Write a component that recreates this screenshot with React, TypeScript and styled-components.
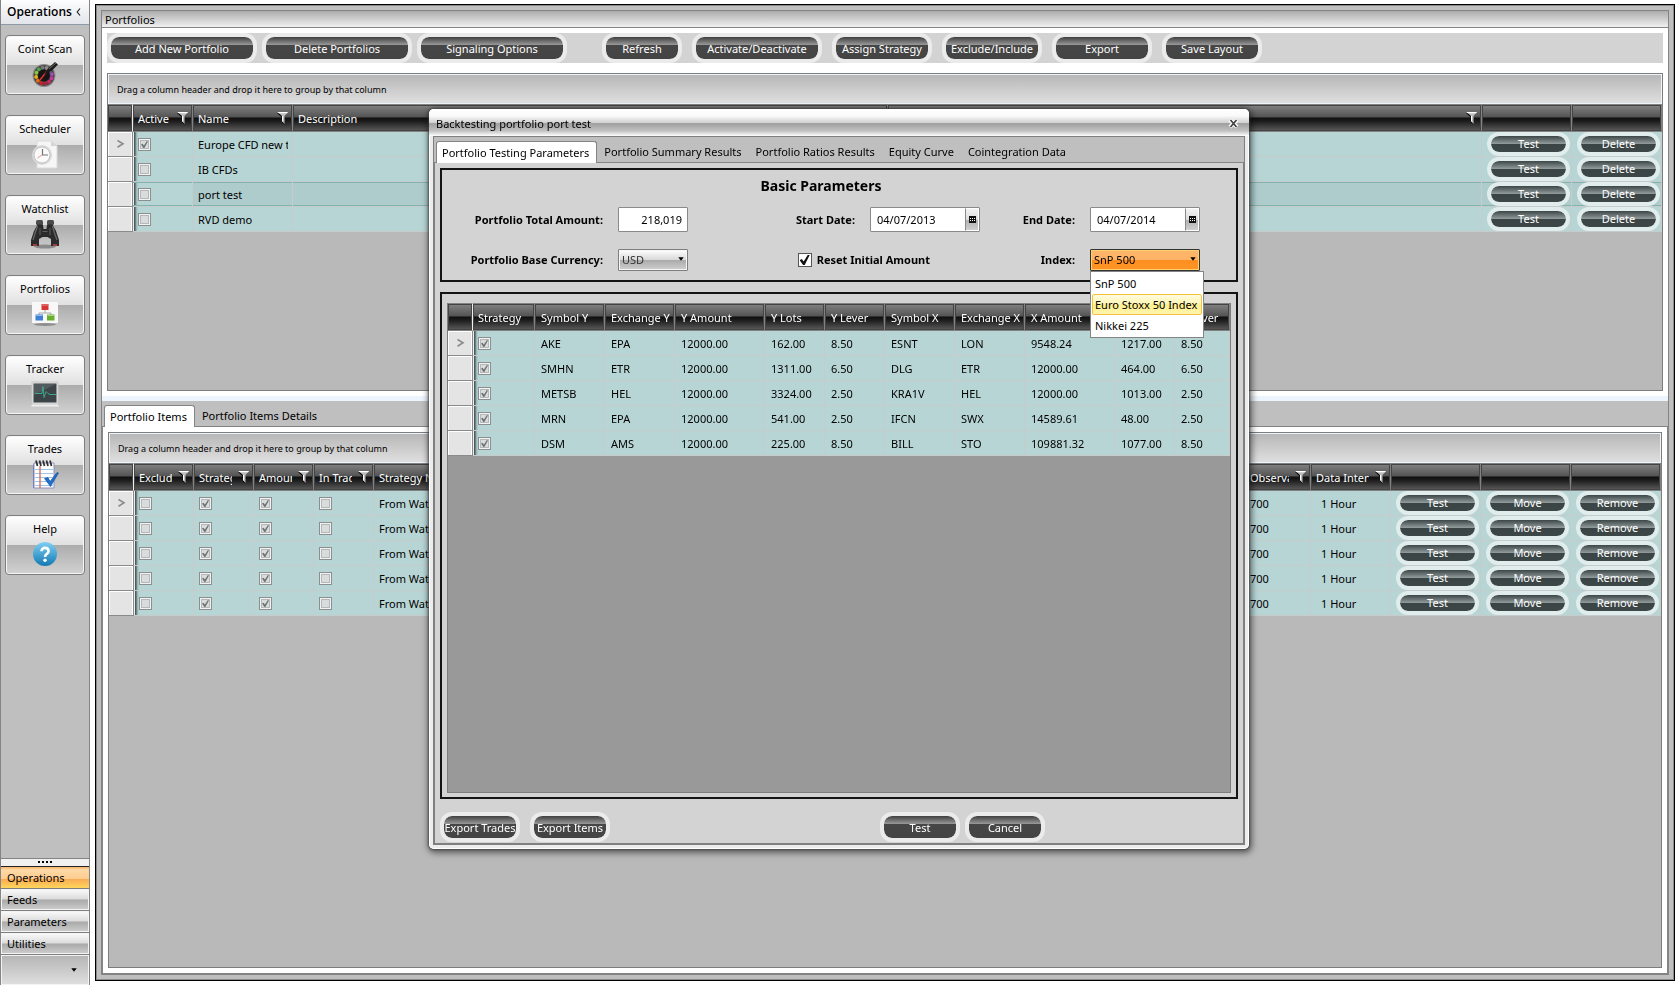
import React, { useState } from 'react';
import styled, { createGlobalStyle, css } from 'styled-components';

const GlobalStyle = createGlobalStyle`
  * { box-sizing: border-box; }
  html, body, #root { height: 100%; }
  body {
    margin: 0;
    background: #fff;
    color: #000;
    font: 11px/16px "Noto Sans", "Open Sans", sans-serif;
    overflow: hidden;
  }
  button, input, select { font: inherit; color: inherit; }
`;

const line = '#848484';

/* ---------- page ---------- */

const Page = styled.div`
  display: flex;
  height: 100vh;
`;

const Sidebar = styled.aside`
  width: 90px;
  flex: none;
  display: flex;
  flex-direction: column;
  background: #bfbfbf;
  border: solid ${line};
  border-width: 0 1px;
`;

const SidebarTitle = styled.h1`
  display: flex;
  align-items: center;
  gap: 4px;
  height: 25px;
  margin: 0;
  padding-left: 6px;
  font-size: 12px;
  line-height: 16px;
  font-weight: 600;
  font-family: "Open Sans", sans-serif;
  background: linear-gradient(#fdfdfe, #e2e5ea);
  border-bottom: 1px solid #8e99a8;
`;

const Collapse = styled.button`
  display: flex;
  padding: 0;
  border: 0;
  background: none;
`;

const Launchers = styled.nav`
  flex: 1;
  display: flex;
  flex-direction: column;
  align-items: center;
  gap: 20px;
  padding-top: 10px;
`;

const Launcher = styled.button`
  width: 80px;
  height: 60px;
  padding: 5px 0 3px;
  display: flex;
  flex-direction: column;
  align-items: center;
  border: 1px solid #7e7e7e;
  border-radius: 4px;
  box-shadow: inset 0 0 0 1px #f6f6f6;
  background: linear-gradient(#fff 0%, #e0e0e0 50%, #acacac 50%, #d2d2d2 100%);
  line-height: 16px;

  svg { display: block; margin: auto 0; }
`;

const Grip = styled.div`
  display: flex;
  justify-content: center;
  gap: 2px;
  height: 8px;
  padding-top: 2px;
  border-top: 1px solid ${line};
  background: #f0f0f0;

  i { width: 2px; height: 2px; background: #000; }
`;

const Section = styled.button<{ $active?: boolean }>`
  height: 22px;
  padding: 0 6px;
  text-align: left;
  border: 0;
  border-bottom: 1px solid #7e7e7e;
  box-shadow: inset 0 0 0 1px #f4f4f4;
  background: linear-gradient(#fbfbfb 0%, #dcdcdc 48%, #a9a9a9 52%, #cecece 100%);
  ${p => p.$active && css`
    border-top: 1px solid #222;
    box-shadow: none;
    height: 23px;
    background: linear-gradient(#f5b469 0%, #fed9a6 14%, #fdcd8f 55%, #fbab55 58%, #ffd65a 100%);
  `}
`;

const SectionOverflow = styled.button`
  height: 30px;
  padding: 0 11px;
  display: flex;
  align-items: center;
  justify-content: flex-end;
  border: 1px solid #f4f4f4;
  background: linear-gradient(#b6b6b6, #dedede);
`;

const Workspace = styled.main`
  flex: 1;
  min-width: 0;
  display: flex;
  padding: 4px 5px;
`;

const Frame = styled.div`
  flex: 1;
  min-width: 0;
  display: flex;
  padding: 5px;
  border: 1px solid #000;
  box-shadow: inset 0 0 0 1px #8a8a8a;
  background: #bfbfbf;
`;

const Panel = styled.section`
  flex: 1;
  min-width: 0;
  display: flex;
  flex-direction: column;
  border: 1px solid ${line};
  background: #fff;
`;

const PanelTitle = styled.h2`
  height: 17px;
  margin: 0;
  padding-left: 3px;
  font-size: 11px;
  line-height: 17px;
  font-weight: 400;
  border-bottom: 1px solid ${line};
  background: linear-gradient(#acacac, #f0f0f0);
`;

const UpperPane = styled.div`
  flex: 0 0 368px;
  display: flex;
  flex-direction: column;
  gap: 10px;
  padding: 5px;
`;

const Splitter = styled.div`
  height: 5px;
  flex: none;
  background: #ecf4fd;
`;

const LowerPane = styled.div`
  flex: 1;
  min-height: 0;
  display: flex;
  flex-direction: column;
  background: #bfbfbf;
`;

const LowerBody = styled.div`
  flex: 1;
  display: flex;
  padding: 5px;
  border: solid ${line};
  border-width: 0 1px 1px;
  background: #fff;
`;

/* ---------- buttons ---------- */

const Toolbar = styled.div`
  display: flex;
  gap: 10px;
  height: 30px;
  background: #d3d3d3;
`;

const ToolGroup = styled.div`
  display: flex;
  gap: 5px;
  margin-right: 25px;
`;

const Pill = styled.button<{ $w: number }>`
  width: ${p => p.$w}px;
  height: 30px;
  padding: 0;
  flex: none;
  border: 4px solid #ebebeb;
  border-radius: 12px;
  background: linear-gradient(#3f3f3f 0%, #999 36%, #464646 37%, #444 100%) padding-box;
  background-color: #ebebeb;
  color: #fff;
  line-height: 24px;
  white-space: nowrap;
  display: flex;
  justify-content: center;
  overflow: hidden;
`;

const RowPill = styled.button`
  display: block;
  width: 100%;
  height: 24px;
  padding: 0;
  border: 4px solid #e0edec;
  border-radius: 12px;
  background: linear-gradient(#3c4646 0%, #919a9a 48%, #a6adad 50%, #3a4444 53%, #3d4747 100%) padding-box;
  color: #fff;
  line-height: 16px;
`;

/* ---------- tabs ---------- */

const Tabs = styled.div`
  display: flex;
  align-items: flex-end;
  height: 26px;
  flex: none;
  padding-left: 2px;
  border-bottom: 1px solid ${line};
  background: #bfbfbf;
`;

const Tab = styled.button<{ $active?: boolean }>`
  height: 21px;
  padding: 0 6px;
  border: 1px solid transparent;
  border-bottom: 0;
  background: none;
  white-space: nowrap;
  line-height: 20px;
  ${p => p.$active && css`
    height: 22px;
    margin-bottom: -1px;
    padding: 0 7px 0 5px;
    border-color: ${line};
    border-radius: 3px 3px 0 0;
    background: #fff;
  `}
`;

/* ---------- data grid ---------- */

const GridFrame = styled.div<{ $dark?: boolean }>`
  flex: 1;
  min-width: 0;
  border: 1px solid #7d7d7d;
  background: #b9b9b9;
  overflow: hidden;
  ${p => p.$dark && css`
    height: 490px;
    border-top: 0;
    background: #999;
  `}
`;

const GroupBar = styled.div`
  height: 30px;
  padding-left: 8px;
  border: 1px solid #eef4fb;
  background: linear-gradient(#b7b7b7, #dfdfdf);
  font-size: 9px;
  line-height: 29px;
`;

const Table = styled.table`
  width: 100%;
  table-layout: fixed;
  border-collapse: separate;
  border-spacing: 0;
`;

const Th = styled.th`
  height: 28px;
  padding: 1px 0 0;
  font-weight: 400;
  text-align: left;
  color: #fff;
  border: solid #828282;
  border-width: 1px 1px 1px 0;
  box-shadow: inset 0 0 0 1px #444;
  background: linear-gradient(#828282 0%, #545454 46%, #101010 50%, #1c1c1c 62%, #5c5c5c 100%);

  &:first-child { border-right-color: #eee; }
`;

const HeadRow = styled.div<{ $pad?: number }>`
  display: flex;
  align-items: center;
  gap: 6px;
  padding: 0 4px 0 ${p => p.$pad ?? 5}px;

  span { flex: 1; min-width: 0; overflow: hidden; white-space: nowrap; line-height: 22px; }
  svg { flex: none; }
`;

const Td = styled.td<{ $lead?: boolean; $pad?: number }>`
  height: 25px;
  padding: 1px 0 0 ${p => p.$pad ?? 5}px;
  overflow: hidden;
  white-space: nowrap;
  line-height: 16px;
  border: solid #c6cccc;
  border-width: 0 1px 1px 0;
  background: #b8d5d5;
  ${p => p.$lead && css`
    background: linear-gradient(90deg, #eee 0, #eee 1px, #4d5a5a 1px, #4d5a5a 2px, #8eabab 3px, #b8d5d5 5px);
  `}
`;

const Marker = styled.th`
  height: 25px;
  padding: 0;
  border: solid #8a8a8a;
  border-width: 0 1px 1px 0;
  box-shadow: inset 1px 1px 0 #fff, inset -1px 0 0 #fff;
  background: #e4e4e4;

  svg { display: block; margin: 0 auto; }
`;

const Tr = styled.tr<{ $selected?: boolean }>`
  ${p => p.$selected && css`
    ${Td} {
      background-color: #adcccb;
      box-shadow: inset 0 1px 0 #83b3af, inset 0 -1px 0 #83b3af;
    }
  `}
`;

const Clip = styled.div`
  overflow: hidden;
  width: 90px;
`;

const PillCell = styled(Td)`
  padding: 0 1px 0 5px;
`;

const GridCheck = styled.input.attrs({ type: 'checkbox' })`
  appearance: none;
  display: block;
  position: relative;
  width: 13px;
  height: 13px;
  margin: 0;
  border: 1px solid #8b8f8f;
  background: #d8dcdc;
  box-shadow: inset 0 0 0 1px #f2f2f2, inset 0 0 0 2px #b4b8b8;

  &:checked::after {
    content: "";
    position: absolute;
    inset: 2px;
    background: #6f7373;
    clip-path: polygon(0 50%, 22% 40%, 42% 66%, 84% 0, 100% 6%, 48% 100%, 34% 100%);
  }
`;

/* ---------- dialog ---------- */

const Overlay = styled.div`
  position: fixed;
  inset: 0 2px 27px 0;
  display: flex;
  align-items: center;
  justify-content: center;
`;

const Dialog = styled.div`
  width: 820px;
  padding: 0 4px 4px;
  border-radius: 5px;
  background: #ececec;
  box-shadow: inset 0 0 0 1px #fff, 0 0 2px 1px rgba(60, 60, 60, .7), 1px 2px 6px 2px rgba(0, 0, 0, .5);
`;

const DialogTitle = styled.header`
  display: flex;
  justify-content: space-between;
  align-items: center;
  height: 27px;
  margin: 0 -4px;
  padding: 2px 10px 0 7px;
  border-radius: 5px 5px 0 0;
  background: linear-gradient(#fff 0%, #fafafa 25%, #d2d2d2 50%, #9f9f9f 54%, #c0c0c0 80%, #f2f2f2 96%, #fff 100%);

  h2 { margin: 0; font-size: 11px; font-weight: 400; line-height: 16px; }
`;

const Close = styled.button`
  display: flex;
  padding: 0;
  border: 0;
  background: none;
`;

const DialogFrame = styled.div`
  border: 1px solid #7f7f7f;
`;

const DialogBody = styled.div`
  display: flex;
  flex-direction: column;
  gap: 10px;
  padding: 5px 5px 1px;
  border: solid #7f7f7f;
  border-width: 0 1px 1px;
  background: #d3d3d3;
`;

const ParamsBox = styled.form`
  height: 114px;
  border: 2px solid #141414;
  padding: 6px 36px 0 0;

  h3 { margin: 0; font-size: 14px; line-height: 20px; font-weight: 700; text-align: center; }
`;

const Fields = styled.div`
  display: grid;
  grid-template-columns: 162px 70px 1fr 110px 82px 110px;
  grid-template-rows: 25px 22px;
  column-gap: 14px;
  row-gap: 17px;
  padding-top: 11px;
  align-items: center;
`;

const Label = styled.label`
  padding-right: 1px;
  text-align: right;
  font-weight: 700;
  white-space: nowrap;
`;

const TextBox = styled.input`
  width: 100%;
  height: 25px;
  padding: 0 5px;
  border: 1px solid #8a8a8a;
  border-radius: 1px;
  background: #fff;
  text-align: right;
`;

const DateField = styled.div`
  display: flex;
  height: 25px;
  border: 1px solid #8a8a8a;
  border-radius: 1px;
  background: #fff;

  input { flex: 1; min-width: 0; padding: 0 6px; border: 0; background: none; }
  button {
    width: 14px;
    padding: 0;
    display: flex;
    align-items: center;
    justify-content: center;
    border: 1px solid #fff;
    border-left: 1px solid #8a8a8a;
    background: linear-gradient(#f4f4f4 0%, #dcdcdc 50%, #b0b0b0 52%, #cfcfcf 100%);
  }
`;

const SelectWrap = styled.div`
  position: relative;
  height: 22px;

  > svg { position: absolute; right: 4px; top: 8px; pointer-events: none; }
`;

const Select = styled.select<{ $open?: boolean }>`
  appearance: none;
  display: block;
  width: 100%;
  height: 22px;
  padding: 0 3px;
  border: 1px solid #7e7e7e;
  border-radius: 1px;
  box-shadow: inset 0 0 0 1px #f6f6f6;
  background: linear-gradient(#fff 0%, #d9d9d9 48%, #ababab 52%, #d0d0d0 100%);
  color: #333;
  ${p => p.$open && css`
    border-color: #333;
    box-shadow: inset 0 0 0 1px #ffcf6b;
    color: #000;
    background: linear-gradient(#ffb76b 0%, #ffb265 48%, #fe8f20 52%, #fe9426 100%);
  `}
`;

const Menu = styled.ul`
  position: absolute;
  z-index: 2;
  top: 22px;
  left: 0;
  min-width: 114px;
  margin: 0;
  padding: 1px;
  list-style: none;
  border: 1px solid #848484;
  background: #fff;
`;

const MenuItem = styled.li<{ $hot?: boolean }>`
  height: 21px;
  padding: 0 2px;
  border: 1px solid transparent;
  border-radius: 2px;
  line-height: 19px;
  white-space: nowrap;
  ${p => p.$hot && css`
    border-color: #f5c13c;
    background: linear-gradient(#fffbe0 0%, #fff6b4 45%, #ffef8e 55%, #fff5b0 100%);
  `}
`;

const ResetLabel = styled.label`
  grid-column: 3 / 5;
  justify-self: end;
  display: flex;
  align-items: center;
  gap: 5px;
  padding-right: 50px;
  font-weight: 700;
  white-space: nowrap;
`;

const BigCheck = styled.input.attrs({ type: 'checkbox' })`
  appearance: none;
  position: relative;
  width: 14px;
  height: 14px;
  margin: 0;
  border: 1px solid #555;
  background: #fff;

  &:checked::after {
    content: "";
    position: absolute;
    inset: 1px;
    background: #111;
    clip-path: polygon(0 52%, 20% 40%, 40% 66%, 80% 0, 100% 0, 50% 100%, 34% 100%);
  }
`;

const ItemsBox = styled.div`
  display: flex;
  padding: 9px 5px 4px;
  border: 2px solid #141414;
`;

const Footer = styled.footer`
  display: flex;
  gap: 10px;
  padding-top: 3px;
`;

const Confirm = styled.div`
  display: flex;
  gap: 5px;
  margin-left: 260px;
`;

/* ---------- drawings ---------- */

const Funnel = () => (
  <svg width="11" height="13" viewBox="0 0 11 13" aria-hidden="true">
    <path d="M0 1H3L5.500 4.500V10L8 13 5 10.500 4.500 5Z" fill="#000" />
    <path d="M.5 0H11L7.500 4V12L5 9V4Z" fill="#bdbdbd" />
    <path d="M.5 0H11L10 1.300H1.500Z" fill="#fff" />
    <path d="M5 4h1v6L5 9Z" fill="#fff" />
  </svg>
);

const Arrow = () => (
  <svg width="6" height="4" viewBox="0 0 6 4" aria-hidden="true"><path d="M.3.200h5.400L3 3.800Z" fill="#000" /></svg>
);

const Current = () => (
  <svg width="9" height="10" viewBox="0 0 9 10" aria-hidden="true">
    <path d="M1.500 1.500 7 4.800 1.500 8.200" fill="none" stroke="#8c8c8c" strokeWidth="1.600" />
  </svg>
);

const Calendar = () => (
  <svg width="7" height="7" viewBox="0 0 7 7" aria-hidden="true">
    <path d="M0 0h7v7H0Z" fill="#111" />
    <path d="M1 2h1v1H1ZM3 2h1v1H3ZM5 2h1v1H5ZM1 4h1v1H1ZM3 4h1v1H3ZM5 4h1v1H5Z" fill="#fff" />
  </svg>
);

const dial = ['#b02040', '#d02020', '#e86a10', '#e8b818', '#8cc63a', '#4aa84a', '#777', '#8d8d8d', '#8d6aa8', '#a34cc0', '#c8369a', '#c82a5c'];

const icons: Record<string, React.ReactNode> = {
  'Coint Scan': (
    <svg width="28" height="28" viewBox="0 0 28 28">
      <circle cx="13" cy="15.500" r="11.500" fill="#8d8d8d" />
      <circle cx="13" cy="15.500" r="10.500" fill="#4a4446" />
      {dial.map((c, i) => {
        const a = (i * 30 + 80) * Math.PI / 180;
        return <circle key={c} cx={13 + 8 * Math.cos(a)} cy={15.5 + 8 * Math.sin(a)} r="1.900" fill={c} />;
      })}
      <circle cx="13" cy="15.500" r="6" fill="#151515" />
      <path d="M9 20 16 11" stroke="#e03030" strokeWidth="1.500" />
      <path d="M13 14.500 17 8.500 24 2 27 4.500 20.500 11Z" fill="#1c1c1c" />
      <path d="M18 9 25 3" stroke="#666" />
    </svg>
  ),
  Scheduler: (
    <svg width="28" height="30" viewBox="0 0 28 30">
      <path d="M6 2H20L26 7V29H6Z" fill="#f6f6f6" stroke="#dadada" />
      <path d="M20 2V7H26Z" fill="#d5d5d5" />
      <circle cx="11" cy="16" r="10" fill="#d9d9d9" />
      <circle cx="11" cy="16" r="8" fill="#fafafa" stroke="#c4c4c4" />
      <path d="M11.500 10V16H17" fill="none" stroke="#777" strokeWidth="1.200" />
      <path d="M11 16 6.500 19" stroke="#e79a9a" />
    </svg>
  ),
  Watchlist: (
    <svg width="30" height="30" viewBox="0 0 30 30">
      <ellipse cx="15" cy="27.500" rx="11" ry="2" fill="#8b8b8b" />
      <rect x="6" y="1" width="7" height="5" rx="1.500" fill="#4a4a4a" />
      <rect x="17" y="1" width="7" height="5" rx="1.500" fill="#4a4a4a" />
      <path d="M7.500 5.500H13L13.500 10H16.500L17 5.500H22.500L26 12 29 21V27H21V20L17.500 18H12.500L9 20V27H1V21L4 12Z" fill="#2b2b2b" />
      <path d="M7.500 7 5.500 13 3 21M22.500 7l2 7L27 21" fill="none" stroke="#666" strokeWidth="1.300" />
      <path d="M12.500 12.500h5M10 9v7M20 9v7" stroke="#606060" />
      <path d="M3 26h4M23 26h4" stroke="#c44" strokeWidth="1.500" />
    </svg>
  ),
  Portfolios: (
    <svg width="28" height="26" viewBox="0 0 28 26">
      <ellipse cx="14" cy="23.500" rx="11" ry="1.500" fill="#8e8e8e" />
      <rect x="1" y="1" width="26" height="21" rx="1" fill="#f8f8f8" />
      <path d="M14 9v3M8 14.500V12H20V14.500" fill="none" stroke="#a8a8a8" />
      <rect x="10.500" y="3" width="7" height="6" fill="#d93434" />
      <rect x="4.500" y="13.500" width="7.500" height="6" fill="#3f7fd6" />
      <rect x="16" y="13.500" width="7.500" height="6" fill="#67b02c" />
      <path d="M11 4h6M5 14.500h6.500M16.500 14.500h6.500" stroke="#fff" opacity=".45" />
    </svg>
  ),
  Tracker: (
    <svg width="28" height="26" viewBox="0 0 28 26">
      <path d="M0 25.500H28L26 22H2Z" fill="#ededed" />
      <rect x="1" y="1" width="26" height="22" fill="#e2e2e2" stroke="#c8c8c8" />
      <rect x="2.500" y="2.500" width="23" height="19" fill="#3d4447" />
      <path d="M3 3H25L3 14Z" fill="#545b5e" />
      <path d="M4 12.500h7l1-7 1 11 2-6 2 2 2 1h6" fill="none" stroke="#3fa58c" strokeWidth="1" />
    </svg>
  ),
  Trades: (
    <svg width="28" height="30" viewBox="0 0 28 30">
      <path d="M3 4 23 4V29H3Z" fill="#fff" stroke="#8a90c0" />
      <path d="M3 29V5l-1 1v23Z" fill="#7a80b4" />
      <path d="M4 10.500H22M4 14.500H22M4 18.500H22M4 22.500H22M4 26.500H22" stroke="#9cc6ea" />
      <path d="M9 7V29" stroke="#e05a3c" strokeWidth="1.200" />
      <path d="M5 1.500 6.500 7M8.500 1.500 10 7M12 1.500 13.500 7M15.500 1.500 17 7M19 1.500 20.500 7" stroke="#333" strokeWidth="1.800" />
      <path d="M13.500 19.500 17 18.500 19 22.500 26 13.500 27.500 14 19.500 27.500Z" fill="#1f6fcb" stroke="#124a94" strokeWidth=".6" />
    </svg>
  ),
  Help: (
    <svg width="26" height="26" viewBox="0 0 26 26">
      <defs>
        <linearGradient id="help" x2="0" y2="1"><stop stopColor="#7fd0f2" /><stop offset="1" stopColor="#1279b4" /></linearGradient>
      </defs>
      <circle cx="13" cy="13" r="12" fill="url(#help)" />
      <path d="M9.500 10.200C9.500 5.600 16.600 6 16.600 10.200 16.600 13 13 12.600 13 16" fill="none" stroke="#fff" strokeWidth="2.600" />
      <circle cx="13" cy="19.200" r="1.700" fill="#fff" />
    </svg>
  ),
};

/* ---------- data ---------- */

const portfolios = [
  { name: 'Europe CFD new test', active: true },
  { name: 'IB CFDs', active: false },
  { name: 'port test', active: false, selected: true },
  { name: 'RVD demo', active: false },
];

const itemColumns = ['Symbol Y', 'Exchange Y', 'Y Amount', 'Y Lots', 'Y Lever', 'Symbol X', 'Exchange X', 'X Amount', 'X Lots', 'X Lever'];
const itemWidths = [62, 70, 70, 90, 60, 60, 70, 70, 90, 60, 55];
const items = [
  ['AKE', 'EPA', '12000.00', '162.00', '8.50', 'ESNT', 'LON', '9548.24', '1217.00', '8.50'],
  ['SMHN', 'ETR', '12000.00', '1311.00', '6.50', 'DLG', 'ETR', '12000.00', '464.00', '6.50'],
  ['METSB', 'HEL', '12000.00', '3324.00', '2.50', 'KRA1V', 'HEL', '12000.00', '1013.00', '2.50'],
  ['MRN', 'EPA', '12000.00', '541.00', '2.50', 'IFCN', 'SWX', '14589.61', '48.00', '2.50'],
  ['DSM', 'AMS', '12000.00', '225.00', '8.50', 'BILL', 'STO', '109881.32', '1077.00', '8.50'],
];

const Head = ({ text, filter, pad }: { text?: string; filter?: boolean; pad?: number }) => (
  <Th scope="col">
    <HeadRow $pad={pad}>
      <span>{text}</span>
      {filter && <Funnel />}
    </HeadRow>
  </Th>
);

const Cols = ({ widths }: { widths: (number | undefined)[] }) => (
  <colgroup>
    {widths.map((w, i) => <col key={i} style={w ? { width: w } : undefined} />)}
  </colgroup>
);

const groupHint = 'Drag a column header and drop it here to group by that column';

function PortfolioGrid() {
  return (
    <GridFrame>
      <GroupBar>{groupHint}</GroupBar>
      <Table>
        <Cols widths={[25, 60, 100, undefined, undefined, 90, 90]} />
        <thead>
          <tr>
            <Head />
            <Head text="Active" filter />
            <Head text="Name" filter />
            <Head text="Description" />
            <Head filter />
            <Head />
            <Head />
          </tr>
        </thead>
        <tbody>
          {portfolios.map((p, i) => (
            <Tr key={p.name} $selected={p.selected}>
              <Marker scope="row">{i === 0 && <Current />}</Marker>
              <Td $lead><GridCheck checked={p.active} disabled readOnly aria-label={`${p.name} active`} /></Td>
              <Td><Clip>{p.name}</Clip></Td>
              <Td />
              <Td />
              <PillCell><RowPill>Test</RowPill></PillCell>
              <PillCell><RowPill>Delete</RowPill></PillCell>
            </Tr>
          ))}
        </tbody>
      </Table>
    </GridFrame>
  );
}

function PortfolioItemsGrid() {
  return (
    <GridFrame>
      <GroupBar>{groupHint}</GroupBar>
      <Table>
        <Cols widths={[25, 60, 60, 60, 60, undefined, 66, 80, 90, 90, 90]} />
        <thead>
          <tr>
            <Head />
            <Head text="Exclude" filter />
            <Head text="Strategy" filter />
            <Head text="Amount" filter />
            <Head text="In Trade" filter />
            <Head text="Strategy Name" />
            <Head text="Observations" filter />
            <Head text="Data Interval" filter />
            <Head />
            <Head />
            <Head />
          </tr>
        </thead>
        <tbody>
          {items.map((row, i) => (
            <Tr key={row[0]}>
              <Marker scope="row">{i === 0 && <Current />}</Marker>
              <Td $lead><GridCheck checked={false} disabled readOnly aria-label="Exclude" /></Td>
              <Td><GridCheck checked disabled readOnly aria-label="Strategy" /></Td>
              <Td><GridCheck checked disabled readOnly aria-label="Amount" /></Td>
              <Td><GridCheck checked={false} disabled readOnly aria-label="In Trade" /></Td>
              <Td>From Watchlist</Td>
              <Td>700</Td>
              <Td $pad={10}>1 Hour</Td>
              <PillCell><RowPill>Test</RowPill></PillCell>
              <PillCell><RowPill>Move</RowPill></PillCell>
              <PillCell><RowPill>Remove</RowPill></PillCell>
            </Tr>
          ))}
        </tbody>
      </Table>
    </GridFrame>
  );
}

function BacktestDialog() {
  const [reset, setReset] = useState(true);
  return (
    <Overlay>
      <Dialog role="dialog" aria-labelledby="dialog-title">
        <DialogTitle>
          <h2 id="dialog-title">Backtesting portfolio port test</h2>
          <Close aria-label="Close">
            <svg width="11" height="11" viewBox="0 0 11 11">
              <path d="M2 2 9 9M9 2 2 9" stroke="#fff" strokeWidth="4" />
              <path d="M2.500 2 8.500 9M8.500 2 2.500 9" stroke="#444" strokeWidth="1.800" />
            </svg>
          </Close>
        </DialogTitle>
        <DialogFrame>
          <Tabs role="tablist">
            <Tab role="tab" $active>Portfolio Testing Parameters</Tab>
            <Tab role="tab">Portfolio Summary Results</Tab>
            <Tab role="tab">Portfolio Ratios Results</Tab>
            <Tab role="tab">Equity Curve</Tab>
            <Tab role="tab">Cointegration Data</Tab>
          </Tabs>
          <DialogBody>
            <ParamsBox>
              <h3>Basic Parameters</h3>
              <Fields>
                <Label htmlFor="total">Portfolio Total Amount:</Label>
                <TextBox id="total" defaultValue="218,019" />
                <Label htmlFor="start">Start Date:</Label>
                <DateField>
                  <input id="start" defaultValue="04/07/2013" />
                  <button type="button" aria-label="Pick start date"><Calendar /></button>
                </DateField>
                <Label htmlFor="end">End Date:</Label>
                <DateField>
                  <input id="end" defaultValue="04/07/2014" />
                  <button type="button" aria-label="Pick end date"><Calendar /></button>
                </DateField>
                <Label htmlFor="currency">Portfolio Base Currency:</Label>
                <SelectWrap>
                  <Select id="currency"><option>USD</option></Select>
                  <Arrow />
                </SelectWrap>
                <ResetLabel>
                  <BigCheck checked={reset} onChange={e => setReset(e.target.checked)} />
                  Reset Initial Amount
                </ResetLabel>
                <Label htmlFor="index">Index:</Label>
                <SelectWrap>
                  <Select id="index" $open>
                    <option>SnP 500</option>
                    <option>Euro Stoxx 50 Index</option>
                    <option>Nikkei 225</option>
                  </Select>
                  <Arrow />
                  <Menu role="listbox" aria-label="Index">
                    <MenuItem role="option">SnP 500</MenuItem>
                    <MenuItem role="option" $hot>Euro Stoxx 50 Index</MenuItem>
                    <MenuItem role="option">Nikkei 225</MenuItem>
                  </Menu>
                </SelectWrap>
              </Fields>
            </ParamsBox>
            <ItemsBox>
              <GridFrame $dark>
                <Table>
                  <Cols widths={[25, ...itemWidths]} />
                  <thead>
                    <tr>
                      <Head />
                      <Head text="Strategy" />
                      {itemColumns.map(c => <Head key={c} text={c} pad={6} />)}
                    </tr>
                  </thead>
                  <tbody>
                    {items.map((row, i) => (
                      <Tr key={row[0]}>
                        <Marker scope="row">{i === 0 && <Current />}</Marker>
                        <Td $lead><GridCheck checked disabled readOnly aria-label={`${row[0]} strategy`} /></Td>
                        {row.map((v, j) => <Td key={j} $pad={6}>{v}</Td>)}
                      </Tr>
                    ))}
                  </tbody>
                </Table>
              </GridFrame>
            </ItemsBox>
            <Footer>
              <Pill $w={80}>Export Trades</Pill>
              <Pill $w={80}>Export Items</Pill>
              <Confirm>
                <Pill $w={80}>Test</Pill>
                <Pill $w={80}>Cancel</Pill>
              </Confirm>
            </Footer>
          </DialogBody>
        </DialogFrame>
      </Dialog>
    </Overlay>
  );
}

export default function App() {
  return (
    <>
      <GlobalStyle />
      <Page>
        <Sidebar>
          <SidebarTitle>
            Operations
            <Collapse aria-label="Collapse">
              <svg width="5" height="8" viewBox="0 0 5 8"><path d="M4 .5 1.200 4 4 7.500" fill="none" stroke="#222" strokeWidth="1.200" /></svg>
            </Collapse>
          </SidebarTitle>
          <Launchers>
            {Object.entries(icons).map(([name, icon]) => (
              <Launcher key={name}>{name}{icon}</Launcher>
            ))}
          </Launchers>
          <Grip><i /><i /><i /><i /></Grip>
          <Section $active>Operations</Section>
          <Section>Feeds</Section>
          <Section>Parameters</Section>
          <Section>Utilities</Section>
          <SectionOverflow aria-label="More sections"><Arrow /></SectionOverflow>
        </Sidebar>
        <Workspace>
          <Frame>
            <Panel>
              <PanelTitle>Portfolios</PanelTitle>
              <UpperPane>
                <Toolbar>
                  <ToolGroup>
                    <Pill $w={150}>Add New Portfolio</Pill>
                    <Pill $w={150}>Delete Portfolios</Pill>
                    <Pill $w={150}>Signaling Options</Pill>
                  </ToolGroup>
                  <Pill $w={80}>Refresh</Pill>
                  <Pill $w={130}>Activate/Deactivate</Pill>
                  <Pill $w={100}>Assign Strategy</Pill>
                  <Pill $w={100}>Exclude/Include</Pill>
                  <Pill $w={100}>Export</Pill>
                  <Pill $w={100}>Save Layout</Pill>
                </Toolbar>
                <PortfolioGrid />
              </UpperPane>
              <Splitter />
              <LowerPane>
                <Tabs role="tablist">
                  <Tab role="tab" $active>Portfolio Items</Tab>
                  <Tab role="tab">Portfolio Items Details</Tab>
                </Tabs>
                <LowerBody>
                  <PortfolioItemsGrid />
                </LowerBody>
              </LowerPane>
            </Panel>
          </Frame>
        </Workspace>
      </Page>
      <BacktestDialog />
    </>
  );
}
